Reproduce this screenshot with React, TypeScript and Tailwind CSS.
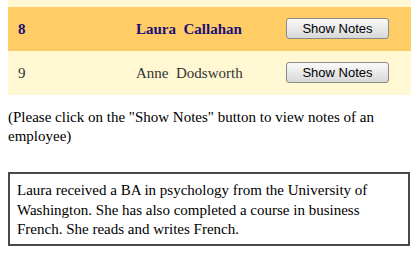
import React from "react";

const rows = [
  { id: "8", name: "Laura  Callahan", active: true },
  { id: "9", name: "Anne  Dodsworth", active: false },
];

const App = () => {
  return (
    <div className="w-[419px] h-[253px] overflow-hidden bg-white font-['Liberation_Serif',serif] text-[15px] text-black">
      <div className="mx-2 w-[403px]">
        <div className="h-[7px] bg-[#fff8d2]" />
        {rows.map((r) => (
          <div
            key={r.id}
            className={
              "flex items-center h-[44px] " +
              (r.active ? "bg-[#ffcc66] font-bold text-[#1a0f7a]" : "bg-[#fff8d2] text-[#333]")
            }
          >
            <div className="w-[128px] pl-[10px]">{r.id}</div>
            <div className="w-[150px] whitespace-pre">{r.name}</div>
            <button className="w-[103px] h-[21px] -mt-[2px] rounded-[3px] border border-[#8a8a8a] bg-gradient-to-b from-[#fafafa] to-[#d8d8d8] font-['Liberation_Sans',sans-serif] text-[13px] font-normal text-black leading-none">
              Show Notes
            </button>
          </div>
        ))}
      </div>
      <p className="mx-2 mt-[13px] leading-[19px]">
        (Please click on the "Show Notes" button to view notes of an employee)
      </p>
      <div className="mx-2 mt-[26px] w-[402px] border-2 border-[#4a4a4a] pl-[7px] pt-[7px] pb-[4px] leading-[19.5px]">
        Laura received a BA in psychology from the University of Washington. She has also completed a course in business French. She reads and writes French.
      </div>
    </div>
  );
};

export default App;
